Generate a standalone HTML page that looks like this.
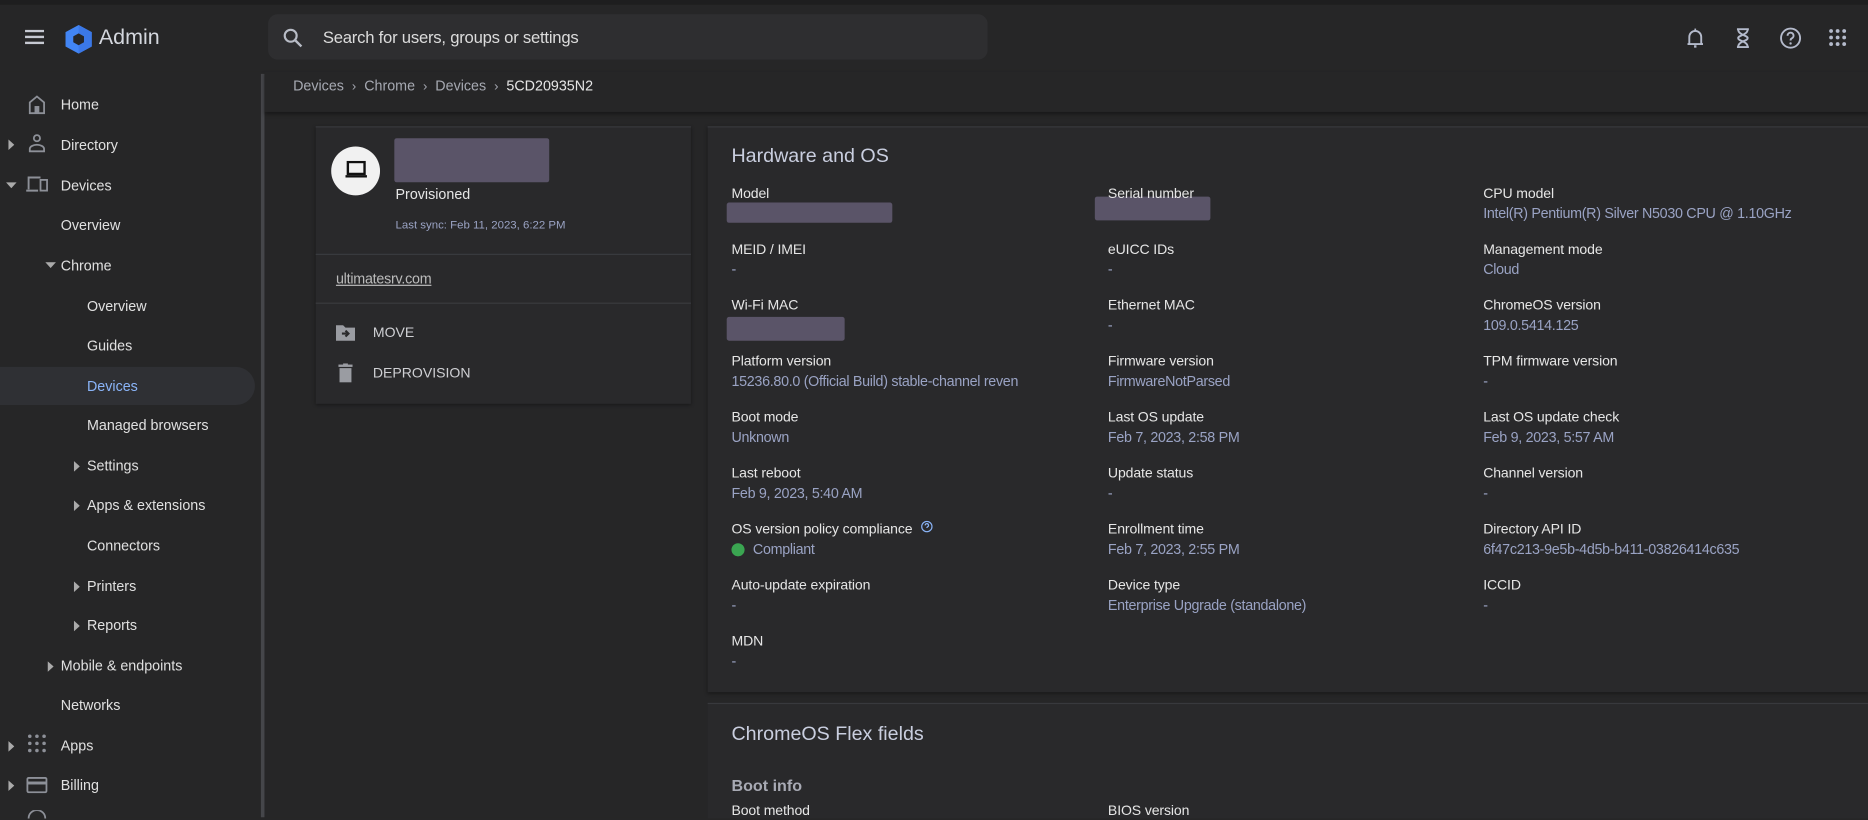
<!DOCTYPE html>
<html><head><meta charset="utf-8"><style>
html,body{margin:0;padding:0;background:#262627;overflow:hidden;width:1868px;height:817px}
#w{position:absolute;left:0;top:0;width:1568px;height:686px;transform:scale(1.19133);transform-origin:0 0;background:#262627;font-family:"Liberation Sans",sans-serif;color:#e3e3e3}
.a{position:absolute;white-space:nowrap}
.top{position:absolute;left:0;top:0;width:1568px;height:60px;background:#262627;border-top:4px solid #1e1e1f;box-sizing:border-box}
.nav{font-size:12px;color:#e0e0e0}
.lbl{font-size:11.8px;color:#e6e6e6;letter-spacing:-0.1px}
.val{font-size:12px;color:#9aa3c4;letter-spacing:-0.25px}
.red{position:absolute;background:#5a5468;border-radius:2px}
svg{position:absolute}
</style></head><body><div id="w">
<div class="top"></div>
<svg style="left:21px;top:25px" width="16" height="13"><rect y="0" width="16" height="2" fill="#c6c9d2"/><rect y="5" width="16" height="2" fill="#c6c9d2"/><rect y="10" width="16" height="2" fill="#c6c9d2"/></svg>
<svg style="left:53px;top:20px" width="26" height="26" viewBox="0 0 26 26"><polygon points="13,1 24,7 24,19 13,25 2,19 2,7" fill="#4285f4"/><polygon points="13,1 24,7 24,19 13,25" fill="#3b78e7"/><polygon points="13,8 17.5,10.5 17.5,15.5 13,18 8.5,15.5 8.5,10.5" fill="#262627"/></svg>
<div class="a" style="left:83px;top:21px;font-size:18px;color:#d4d7de">Admin</div>
<div style="position:absolute;left:225px;top:12px;width:604px;height:38px;background:#2e2e30;border-radius:8px"></div>
<svg style="left:237px;top:23px" width="18" height="18" viewBox="0 0 18 18"><circle cx="7" cy="7" r="5" stroke="#b8bcc6" stroke-width="1.8" fill="none"/><line x1="11" y1="11" x2="16" y2="16" stroke="#b8bcc6" stroke-width="2"/></svg>
<div class="a" style="left:271px;top:23px;font-size:14px;color:#dcdcdc;letter-spacing:-0.2px">Search for users, groups or settings</div>
<svg style="left:1414px;top:23px" width="18" height="18" viewBox="0 0 18 18"><path d="M4 14V8a5 5 0 0 1 10 0v6M2.5 14h13" stroke="#b4bacb" stroke-width="1.6" fill="none"/><rect x="8" y="15" width="2" height="2" fill="#b4bacb"/><rect x="8.3" y="1" width="1.4" height="2" fill="#b4bacb"/></svg>
<svg style="left:1455px;top:23px" width="16" height="18" viewBox="0 0 16 18"><path d="M3 1.5h10M3 16.5h10M4 1.5c0 5 8 5 8 7.5s-8 2.5-8 7.5M12 1.5c0 5-8 5-8 7.5s8 2.5 8 7.5" stroke="#b4bacb" stroke-width="1.6" fill="none"/></svg>
<svg style="left:1493px;top:22px" width="20" height="20" viewBox="0 0 20 20"><circle cx="10" cy="10" r="8" stroke="#b4bacb" stroke-width="1.6" fill="none"/><path d="M7.5 8a2.5 2.5 0 1 1 3.5 2.2c-.8.4-1 .9-1 1.8" stroke="#b4bacb" stroke-width="1.6" fill="none"/><circle cx="10" cy="14.5" r="1" fill="#b4bacb"/></svg>
<svg style="left:1535px;top:24px" width="15" height="15" viewBox="0 0 15 15" fill="#b4bacb"><circle cx="2" cy="2" r="1.6"/><circle cx="7.5" cy="2" r="1.6"/><circle cx="13" cy="2" r="1.6"/><circle cx="2" cy="7.5" r="1.6"/><circle cx="7.5" cy="7.5" r="1.6"/><circle cx="13" cy="7.5" r="1.6"/><circle cx="2" cy="13" r="1.6"/><circle cx="7.5" cy="13" r="1.6"/><circle cx="13" cy="13" r="1.6"/></svg>
<div style="position:absolute;left:219px;top:62px;width:3px;height:624px;background:#45464a"></div>
<div style="position:absolute;left:0;top:308px;width:214px;height:32px;background:#2f3034;border-radius:0 16px 16px 0"></div>
<svg style="left:23px;top:79px" width="16" height="17" viewBox="0 0 16 17"><path d="M2 16V7l6-5 6 5v9H2z" stroke="#8d9098" stroke-width="1.5" fill="none"/><rect x="6" y="10" width="4" height="6" fill="#8d9098"/></svg>
<svg style="left:23px;top:112px" width="16" height="16" viewBox="0 0 16 16"><circle cx="8" cy="4" r="2.6" stroke="#8d9098" stroke-width="1.5" fill="none"/><path d="M2 15v-2c0-2 3-3.5 6-3.5s6 1.5 6 3.5v2z" stroke="#8d9098" stroke-width="1.5" fill="none"/></svg>
<svg style="left:21px;top:147px" width="20" height="15" viewBox="0 0 20 15"><path d="M3 12V2h10M1 13h10" stroke="#8d9098" stroke-width="1.6" fill="none"/><rect x="13" y="4" width="5.5" height="9" stroke="#8d9098" stroke-width="1.5" fill="none"/></svg>
<svg style="left:23px;top:616px" width="16" height="16" viewBox="0 0 16 16" fill="#8d9098"><circle cx="2" cy="2" r="1.5"/><circle cx="8" cy="2" r="1.5"/><circle cx="14" cy="2" r="1.5"/><circle cx="2" cy="8" r="1.5"/><circle cx="8" cy="8" r="1.5"/><circle cx="14" cy="8" r="1.5"/><circle cx="2" cy="14" r="1.5"/><circle cx="8" cy="14" r="1.5"/><circle cx="14" cy="14" r="1.5"/></svg>
<svg style="left:22px;top:652px" width="18" height="14" viewBox="0 0 18 14"><rect x="1" y="1" width="16" height="12" rx="1" stroke="#8d9098" stroke-width="1.5" fill="none"/><rect x="1" y="4" width="16" height="2.5" fill="#8d9098"/></svg>
<svg style="left:22px;top:680px" width="18" height="8"><path d="M2 7a7 7 0 0 1 14 0" stroke="#8d9098" stroke-width="1.5" fill="none"/></svg>
<svg style="left:7px;top:117px" width="5" height="9"><path d="M0 0l5 4.5L0 9z" fill="#aaa"/></svg>
<svg style="left:5px;top:153px" width="9" height="5"><path d="M0 0h9L4.5 5z" fill="#aaa"/></svg>
<svg style="left:38px;top:220px" width="9" height="5"><path d="M0 0h9L4.5 5z" fill="#aaa"/></svg>
<svg style="left:62px;top:387px" width="5" height="9"><path d="M0 0l5 4.5L0 9z" fill="#aaa"/></svg>
<svg style="left:62px;top:420px" width="5" height="9"><path d="M0 0l5 4.5L0 9z" fill="#aaa"/></svg>
<svg style="left:62px;top:488px" width="5" height="9"><path d="M0 0l5 4.5L0 9z" fill="#aaa"/></svg>
<svg style="left:62px;top:521px" width="5" height="9"><path d="M0 0l5 4.5L0 9z" fill="#aaa"/></svg>
<svg style="left:40px;top:555px" width="5" height="9"><path d="M0 0l5 4.5L0 9z" fill="#aaa"/></svg>
<svg style="left:7px;top:622px" width="5" height="9"><path d="M0 0l5 4.5L0 9z" fill="#aaa"/></svg>
<svg style="left:7px;top:655px" width="5" height="9"><path d="M0 0l5 4.5L0 9z" fill="#aaa"/></svg>
<div class="a nav" style="left:51px;top:81px">Home</div>
<div class="a nav" style="left:51px;top:115px">Directory</div>
<div class="a nav" style="left:51px;top:149px">Devices</div>
<div class="a nav" style="left:51px;top:182px">Overview</div>
<div class="a nav" style="left:51px;top:216px">Chrome</div>
<div class="a nav" style="left:73px;top:250px">Overview</div>
<div class="a nav" style="left:73px;top:283px">Guides</div>
<div class="a nav" style="left:73px;top:317px;color:#8ab4f8">Devices</div>
<div class="a nav" style="left:73px;top:350px">Managed browsers</div>
<div class="a nav" style="left:73px;top:384px">Settings</div>
<div class="a nav" style="left:73px;top:417px">Apps &amp; extensions</div>
<div class="a nav" style="left:73px;top:451px">Connectors</div>
<div class="a nav" style="left:73px;top:485px">Printers</div>
<div class="a nav" style="left:73px;top:518px">Reports</div>
<div class="a nav" style="left:51px;top:552px">Mobile &amp; endpoints</div>
<div class="a nav" style="left:51px;top:585px">Networks</div>
<div class="a nav" style="left:51px;top:619px">Apps</div>
<div class="a nav" style="left:51px;top:652px">Billing</div>
<div style="position:absolute;left:222px;top:60px;width:1346px;height:34px;background:#262627;box-shadow:0 2px 3px rgba(0,0,0,.35)"></div>
<div class="a" style="left:246px;top:65px;font-size:12px;color:#a6a9b2">Devices &nbsp;<span style="font-size:11px">›</span>&nbsp; Chrome &nbsp;<span style="font-size:11px">›</span>&nbsp; Devices &nbsp;<span style="font-size:11px">›</span>&nbsp; <span style="color:#e6e6e6">5CD20935N2</span></div>
<div style="position:absolute;left:265px;top:106px;width:315px;height:232px;background:#29292b;border-top:1px solid #38393d;box-shadow:0 1px 3px rgba(0,0,0,.4)"></div>
<div style="position:absolute;left:265px;top:213px;width:315px;height:1px;background:#3a3b3f"></div>
<div style="position:absolute;left:265px;top:254px;width:315px;height:1px;background:#3a3b3f"></div>
<div style="position:absolute;left:278px;top:123px;width:41px;height:41px;border-radius:50%;background:#f1f1f1"></div>
<svg style="left:289px;top:135px" width="20" height="16" viewBox="0 0 20 16"><rect x="3" y="1" width="14" height="10" stroke="#111" stroke-width="2" fill="none"/><rect x="1" y="12" width="18" height="2" fill="#111"/></svg>
<div class="red" style="left:331px;top:116px;width:130px;height:37px"></div>
<div class="a" style="left:332px;top:156px;font-size:12px;color:#e6e6e6">Provisioned</div>
<div class="a" style="left:332px;top:184px;font-size:9.6px;color:#9aa3c4">Last sync: Feb 11, 2023, 6:22 PM</div>
<div class="a" style="left:282px;top:227px;font-size:12px;color:#bbb;text-decoration:underline;letter-spacing:-0.2px">ultimatesrv.com</div>
<svg style="left:282px;top:271px" width="16" height="16" viewBox="0 0 16 16"><path d="M0 2h6l2 2h8v11H0z" fill="#9a9ca2"/><path d="M5 9h4M8 6.5L10.5 9 8 11.5" stroke="#29292b" stroke-width="1.8" fill="none"/></svg>
<svg style="left:284px;top:305px" width="12" height="16" viewBox="0 0 12 16"><rect x="0" y="1" width="12" height="2" fill="#9a9ca2"/><rect x="4" y="0" width="4" height="2" fill="#9a9ca2"/><rect x="1" y="4" width="10" height="12" fill="#9a9ca2"/></svg>
<div class="a" style="left:313px;top:272px;font-size:11.8px;color:#cfd0d4">MOVE</div>
<div class="a" style="left:313px;top:306px;font-size:11.8px;color:#cfd0d4">DEPROVISION</div>
<div style="position:absolute;left:594px;top:106px;width:974px;height:474px;background:#29292b;border-top:1px solid #38393d;box-shadow:0 1px 3px rgba(0,0,0,.4)"></div>
<div style="position:absolute;left:594px;top:590px;width:974px;height:96px;background:#29292b;border-top:1px solid #38393d"></div>
<div class="a" style="left:614px;top:122px;font-size:16.5px;color:#c9cedf">Hardware and OS</div>
<div class="a" style="left:614px;top:607px;font-size:16.5px;color:#c9cedf">ChromeOS Flex fields</div>
<div class="a" style="left:614px;top:652px;font-size:13.5px;font-weight:bold;color:#a8aab4">Boot info</div>
<div class="a lbl" style="left:614px;top:673px">Boot method</div>
<div class="a lbl" style="left:930px;top:673px">BIOS version</div>
<div class="red" style="left:610px;top:170px;width:139px;height:17px"></div>
<div class="red" style="left:919px;top:165px;width:97px;height:20px"></div>
<div class="red" style="left:610px;top:266px;width:99px;height:20px"></div>
<div style="position:absolute;left:614px;top:456px;width:11px;height:11px;border-radius:50%;background:#3aa551"></div>
<svg style="left:773px;top:437px" width="10" height="10" viewBox="0 0 10 10"><circle cx="5" cy="5" r="4.3" stroke="#8ab4f8" fill="none"/><path d="M3.6 4a1.4 1.4 0 1 1 2 1.2c-.5.3-.6.5-.6 1" stroke="#8ab4f8" fill="none"/></svg>
<div class="a lbl" style="left:614px;top:155px">Model</div>
<div class="a lbl" style="left:930px;top:155px">Serial number</div>
<div class="a lbl" style="left:1245px;top:155px">CPU model</div>
<div class="a val" style="left:1245px;top:172px">Intel(R) Pentium(R) Silver N5030 CPU @ 1.10GHz</div>
<div class="a lbl" style="left:614px;top:202px">MEID / IMEI</div><div class="a val" style="left:614px;top:219px">-</div>
<div class="a lbl" style="left:930px;top:202px">eUICC IDs</div><div class="a val" style="left:930px;top:219px">-</div>
<div class="a lbl" style="left:1245px;top:202px">Management mode</div><div class="a val" style="left:1245px;top:219px">Cloud</div>
<div class="a lbl" style="left:614px;top:249px">Wi-Fi MAC</div>
<div class="a lbl" style="left:930px;top:249px">Ethernet MAC</div><div class="a val" style="left:930px;top:266px">-</div>
<div class="a lbl" style="left:1245px;top:249px">ChromeOS version</div><div class="a val" style="left:1245px;top:266px">109.0.5414.125</div>
<div class="a lbl" style="left:614px;top:296px">Platform version</div><div class="a val" style="left:614px;top:313px">15236.80.0 (Official Build) stable-channel reven</div>
<div class="a lbl" style="left:930px;top:296px">Firmware version</div><div class="a val" style="left:930px;top:313px">FirmwareNotParsed</div>
<div class="a lbl" style="left:1245px;top:296px">TPM firmware version</div><div class="a val" style="left:1245px;top:313px">-</div>
<div class="a lbl" style="left:614px;top:343px">Boot mode</div><div class="a val" style="left:614px;top:360px">Unknown</div>
<div class="a lbl" style="left:930px;top:343px">Last OS update</div><div class="a val" style="left:930px;top:360px">Feb 7, 2023, 2:58 PM</div>
<div class="a lbl" style="left:1245px;top:343px">Last OS update check</div><div class="a val" style="left:1245px;top:360px">Feb 9, 2023, 5:57 AM</div>
<div class="a lbl" style="left:614px;top:390px">Last reboot</div><div class="a val" style="left:614px;top:407px">Feb 9, 2023, 5:40 AM</div>
<div class="a lbl" style="left:930px;top:390px">Update status</div><div class="a val" style="left:930px;top:407px">-</div>
<div class="a lbl" style="left:1245px;top:390px">Channel version</div><div class="a val" style="left:1245px;top:407px">-</div>
<div class="a lbl" style="left:614px;top:437px">OS version policy compliance</div><div class="a val" style="left:632px;top:454px">Compliant</div>
<div class="a lbl" style="left:930px;top:437px">Enrollment time</div><div class="a val" style="left:930px;top:454px">Feb 7, 2023, 2:55 PM</div>
<div class="a lbl" style="left:1245px;top:437px">Directory API ID</div><div class="a val" style="left:1245px;top:454px">6f47c213-9e5b-4d5b-b411-03826414c635</div>
<div class="a lbl" style="left:614px;top:484px">Auto-update expiration</div><div class="a val" style="left:614px;top:501px">-</div>
<div class="a lbl" style="left:930px;top:484px">Device type</div><div class="a val" style="left:930px;top:501px">Enterprise Upgrade (standalone)</div>
<div class="a lbl" style="left:1245px;top:484px">ICCID</div><div class="a val" style="left:1245px;top:501px">-</div>
<div class="a lbl" style="left:614px;top:531px">MDN</div><div class="a val" style="left:614px;top:548px">-</div>
</div></body></html>
